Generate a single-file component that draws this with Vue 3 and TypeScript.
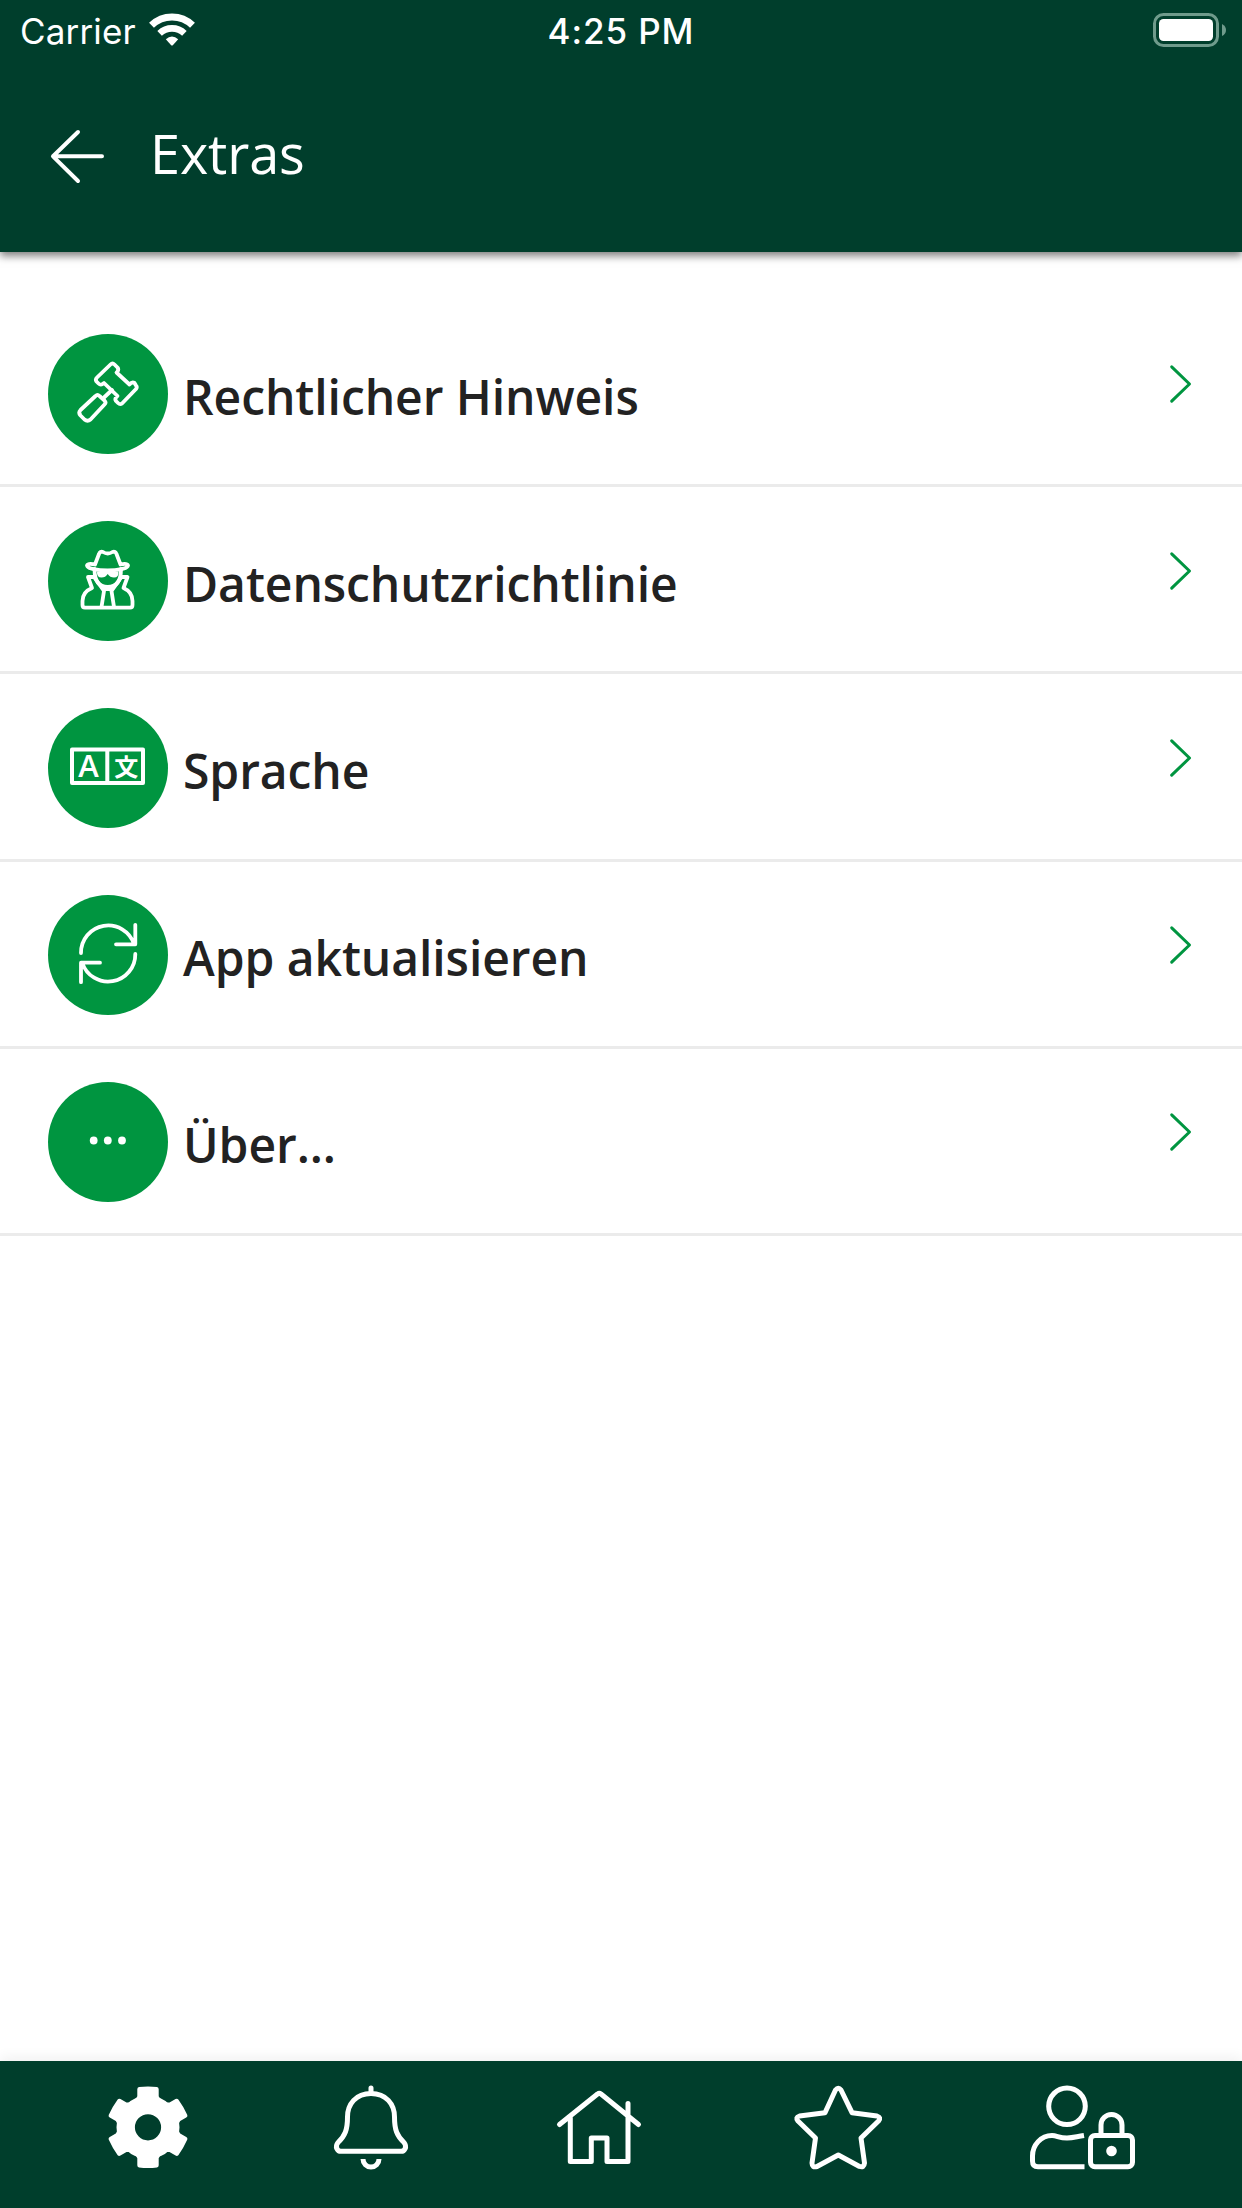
<script setup lang="ts">
interface Entry {
  id: string
  label: string
}

const entries: Entry[] = [
  { id: 'legal', label: 'Rechtlicher Hinweis' },
  { id: 'privacy', label: 'Datenschutzrichtlinie' },
  { id: 'language', label: 'Sprache' },
  { id: 'refresh', label: 'App aktualisieren' },
  { id: 'about', label: 'Über...' },
]
</script>

<template>
  <div class="screen">
    <header class="header">
      <div class="status">
        <div class="status-left">
          <span class="carrier">Carrier</span>
          <svg class="wifi" viewBox="149 12 46 35" width="46" height="35">
            <g fill="none" stroke="#fff">
              <path d="M151.5 25.2A29.5 29.5 0 0 1 192.5 25.2" stroke-width="7" />
              <path d="M159.6 33.3A18 18 0 0 1 184.4 33.3" stroke-width="6.6" />
            </g>
            <path d="M165.8 39.2Q172 34 178.2 39.2L172.8 45.2Q172 46 171.2 45.2Z" fill="#fff" />
          </svg>
        </div>
        <span class="time">4:25 PM</span>
        <svg class="battery" viewBox="1152 12 76 36" width="76" height="36">
          <rect x="1154.5" y="14.5" width="63" height="31" rx="9" fill="none" stroke="#6f9b8c" stroke-width="3" />
          <rect x="1159" y="19" width="54" height="22" rx="4.5" fill="#fff" />
          <path d="M1222 24Q1226 26 1226 30T1222 36Z" fill="#6f9b8c" />
        </svg>
      </div>
      <div class="toolbar">
        <svg class="back" viewBox="48 126 60 60" width="60" height="60">
          <path d="M78 132L53 156.3L78 181M53 156.3H102" fill="none" stroke="#fff" stroke-width="4" stroke-linecap="round" stroke-linejoin="round" />
        </svg>
        <h1 class="title">Extras</h1>
      </div>
    </header>

    <main class="list">
      <div v-for="entry in entries" :key="entry.id" class="row">
        <svg class="badge" viewBox="0 0 120 120" width="120" height="120">
          <circle cx="60" cy="60" r="60" fill="#009540" />
          <g v-if="entry.id === 'legal'" class="line">
            <path d="M62.500 30.500Q64.500 28.500 66.500 30.500L69.500 33.500Q71 35.500 69.500 37.500L68.500 38.500L81.500 50.500Q84 47.500 86.500 49L88 51.500Q89.500 53 88 55L74 69.500Q72 71 70 69L68 67Q66.500 65 68.500 63L69.500 62L56 49L54.500 50Q52.500 51.500 50.500 49.500L48.500 47.500Q47 45.500 49 43.500Z" />
            <path d="M64 56L56 63.500" />
            <path d="M47.500 62Q49.500 60 51.500 62L56.500 66.500Q58.500 68.500 56.500 70.500L42.500 85.500Q39.500 88 36.500 85.500L32.500 81.500Q30 78.500 32.500 76Z" />
          </g>
          <g v-else-if="entry.id === 'privacy'" class="line">
            <path d="M47 43.500L51 33Q52 30 55 31Q59.700 34 64.500 31Q67.500 30 68.500 33L72.500 43.500Q79 42 80 44.500C79 51 40 51 39 44.500Q40 42 47 43.500" />
            <path d="M46.500 48C46.500 60 51 66 59.700 66C68.500 66 73 60 73 48" />
            <path d="M49 50.500H70.500Q71 56.500 66 56.500Q62 56.500 59.700 53Q57.500 56.500 53.500 56.500Q48.500 56.500 49 50.500Z" fill="#fff" stroke="none" />
            <path d="M46 56H40L44 67Q34.500 71 34.500 80V84Q34.500 86.700 37 86.700H82Q84.500 86.700 84.500 84V80Q84.500 71 75.500 67L79.500 56H73.500" />
            <path d="M46 56L56 70L53.500 86M73.500 56L63.500 70L66 86M56 68H63.500" />
          </g>
          <g v-else-if="entry.id === 'language'">
            <path d="M24 41.500H95V75H24ZM59.300 41V75" fill="none" stroke="#fff" stroke-width="4" stroke-linejoin="round" />
            <text x="40.600" y="69.300" class="latin">A</text>
            <text x="78.300" y="67.500" class="han">文</text>
          </g>
          <g v-else-if="entry.id === 'refresh'" class="line">
            <path d="M33 58A27.200 27.200 0 0 1 86 49M87.300 29.800V49.300H68" />
            <path d="M87.300 59A27.200 27.200 0 0 1 34.300 68M33 87.200V67.700H52" />
          </g>
          <g v-else fill="#fff">
            <circle cx="45.700" cy="58.500" r="3.900" />
            <circle cx="59.800" cy="58.500" r="3.900" />
            <circle cx="74" cy="58.500" r="3.900" />
          </g>
        </svg>
        <span class="label">{{ entry.label }}</span>
        <svg class="chevron" viewBox="0 0 24 40" width="24" height="40">
          <path d="M3.700 2.800L21.500 20L3.700 37.200" fill="none" stroke="#009540" stroke-width="3" stroke-linecap="round" stroke-linejoin="round" />
        </svg>
      </div>
    </main>

    <nav class="tabs">
      <svg viewBox="0 2061 260 147" width="260" height="147">
        <g transform="translate(148 2127.300)" fill="#fff">
          <circle r="22.300" fill="none" stroke="#fff" stroke-width="18.400" />
          <path v-for="a in [0, 60, 120, 180, 240, 300]" :key="a" :transform="`rotate(${a})`" d="M-13 -27L-10.700 -31V-38Q-10.700 -39.800 -9 -40.200Q0 -41.200 9 -40.200Q10.700 -39.800 10.700 -38V-31L13 -27Z" />
        </g>
      </svg>
      <svg class="tab-line" viewBox="260 2061 222 147" width="222" height="147">
        <path d="M371 2088V2093M371 2093.500C356 2093.500 347.500 2104 347.500 2117C347.500 2130 345 2136 338 2142.500C334.500 2147 337.500 2151.300 341 2151.300H401C404.500 2151.300 407.500 2147 404 2142.500C397 2136 394.500 2130 394.500 2117C394.500 2104 386 2093.500 371 2093.500Z" />
        <path d="M363 2159A8 8 0 0 0 379 2159" stroke-linecap="butt" />
      </svg>
      <svg class="tab-line" viewBox="482 2061 236 147" width="236" height="147">
        <path d="M559.500 2124.500L597.500 2094Q599.300 2092.800 601 2094L638.500 2124.500M570.300 2118V2161.500H591.300V2138H607V2161.500H628V2103.500" />
      </svg>
      <svg class="tab-line" viewBox="718 2061 238 147" width="238" height="147">
        <path d="M835.500 2090Q838.300 2086.500 841 2090L852 2112.700L877 2116Q881.500 2117.500 878.500 2121L861 2138L864.500 2163Q864 2168 859.500 2166.500L838.300 2155L817 2166.500Q812 2168 812 2163L815.500 2138L798 2121Q795 2117.500 799.500 2116L825 2112.700Z" />
      </svg>
      <svg class="tab-line" viewBox="956 2061 286 147" width="286" height="147">
        <circle cx="1067" cy="2106.300" r="18.300" />
        <path d="M1084 2135.500C1075 2137 1073 2138 1067 2138C1059 2138 1057 2135.500 1052 2135.500C1041 2135.500 1032.500 2145 1032.500 2156V2161Q1032.500 2166.800 1038 2166.800H1084.500" stroke-linecap="butt" />
        <rect x="1090.500" y="2135.500" width="42" height="31.200" rx="4.500" />
        <path d="M1101 2134V2125A10.500 10.500 0 0 1 1122 2125V2134" />
        <circle cx="1111.500" cy="2151" r="5.300" fill="#fff" stroke="none" />
      </svg>
    </nav>
  </div>
</template>

<style>
body {
  margin: 0;
  background: #fff;
}
</style>

<style scoped>
.screen {
  width: 1242px;
  height: 2208px;
  display: flex;
  flex-direction: column;
  overflow: hidden;
  background: #fff;
  font-family: 'Open Sans', sans-serif;
}
.header {
  position: relative;
  height: 252px;
  flex: none;
  background: #003e2c;
  color: #fff;
  box-shadow: 0 4px 8px rgba(0, 0, 0, 0.5);
}
.status {
  height: 60px;
  display: grid;
  grid-template-columns: 1fr auto 1fr;
  font-family: Inter, sans-serif;
  font-size: 35px;
  line-height: 62px;
}
.status-left {
  display: flex;
}
.carrier {
  width: 129px;
  margin-left: 20px;
  letter-spacing: 0.15px;
  white-space: nowrap;
}
.wifi {
  margin-top: 12px;
}
.time {
  font-weight: 500;
  letter-spacing: 0.9px;
}
.battery {
  justify-self: end;
  margin: 12px 14px 0 0;
}
.toolbar {
  display: flex;
  height: 192px;
}
.back {
  margin: 66px 0 0 48px;
}
.title {
  margin: 55px 0 0 42px;
  font-size: 54px;
  font-weight: 400;
  line-height: 76px;
  letter-spacing: -0.1px;
}
.list {
  flex: 1;
  padding-top: 48px;
}
.row {
  box-sizing: border-box;
  height: 187px;
  display: flex;
  padding: 34px 50px 0 48px;
  border-bottom: 3px solid #ebebeb;
}
.row:nth-child(n + 3) {
  height: 188px;
  margin-bottom: -1px;
}
.badge {
  flex: none;
}
.line {
  fill: none;
  stroke: #fff;
  stroke-width: 3.8;
  stroke-linejoin: round;
  stroke-linecap: round;
}
.latin {
  fill: #fff;
  font: 600 31px 'Open Sans', sans-serif;
  text-anchor: middle;
}
.han {
  fill: #fff;
  font: 700 24px 'Noto Sans CJK JP', sans-serif;
  text-anchor: middle;
}
.label {
  flex: 1;
  margin: 30px 0 0 15px;
  font-size: 48px;
  font-weight: 600;
  line-height: 66px;
  letter-spacing: -0.07px;
  color: #222;
}
.chevron {
  margin: 30px 0 0;
}
.tabs {
  flex: none;
  display: flex;
  height: 147px;
  background: #003e2c;
  box-shadow: 0 -4px 12px rgba(0, 0, 0, 0.06);
}
.tab-line {
  fill: none;
  stroke: #fff;
  stroke-width: 5;
  stroke-linecap: round;
  stroke-linejoin: round;
}
</style>
